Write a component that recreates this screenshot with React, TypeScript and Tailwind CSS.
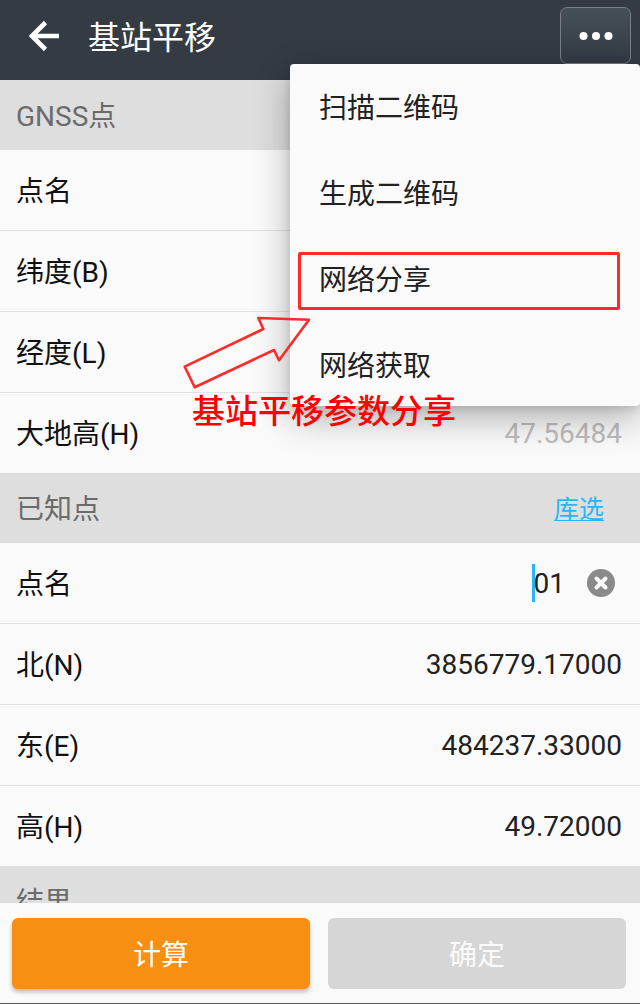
import React, { useState } from 'react';

interface Field {
  id: string;
  label: string;
  value: string;
  disabled?: boolean;
}

const gnssFields: Field[] = [
  { id: 'gnss-name', label: '点名', value: '', disabled: true },
  { id: 'gnss-lat', label: '纬度(B)', value: '', disabled: true },
  { id: 'gnss-lon', label: '经度(L)', value: '', disabled: true },
  { id: 'gnss-height', label: '大地高(H)', value: '47.56484', disabled: true },
];

const knownFields: Field[] = [
  { id: 'known-north', label: '北(N)', value: '3856779.17000' },
  { id: 'known-east', label: '东(E)', value: '484237.33000' },
  { id: 'known-height', label: '高(H)', value: '49.72000' },
];

const menuItems = ['扫描二维码', '生成二维码', '网络分享', '网络获取'];

const SectionHeader: React.FC<{ title: string; children?: React.ReactNode }> = ({ title, children }) => (
  <div className="flex h-[70px] items-center justify-between bg-[#dedede] pl-4 pr-9 pt-1">
    <h2 className="text-[28px] leading-10 text-[#6b6b6b]">{title}</h2>
    {children}
  </div>
);

const FieldRow: React.FC<{ field: Field }> = ({ field }) => (
  <div className="flex h-[81px] items-center border-b border-[#e2e2e2] pl-4 pr-[18px] last:h-20 last:border-b-0">
    <label htmlFor={field.id} className="shrink-0 pt-1 text-[28px] leading-10 text-[#111111]">
      {field.label}
    </label>
    <input
      id={field.id}
      type="text"
      defaultValue={field.value}
      disabled={field.disabled}
      className="h-10 min-w-0 flex-1 bg-transparent pt-0.5 text-right text-[28px] text-[#212121] outline-none disabled:text-[#bdbdbd]"
    />
  </div>
);

const ActionMenu: React.FC = () => (
  <div
    role="menu"
    className="absolute right-0 top-16 flex w-[350px] flex-col gap-4 rounded-[4px] bg-[#fafafa] pb-1.5 pt-2 shadow-[0_12px_36px_rgba(0,0,0,0.3),0_2px_10px_rgba(0,0,0,0.12)]"
  >
    {menuItems.map((item) => (
      <button
        key={item}
        type="button"
        role="menuitem"
        className="relative h-[70px] pl-[29px] pt-1 text-left text-[28px] text-[#212121]"
      >
        {item}
        {item === '网络分享' && (
          <span className="absolute bottom-1 left-2 right-5 top-2 rounded-[2px] border-[3px] border-[#ff2a2a]" />
        )}
      </button>
    ))}
    {/* callout pointing at the share entry */}
    <svg
      className="absolute right-[328px] top-[250px]"
      width="130"
      height="76"
      viewBox="0 0 130 76"
      fill="none"
      stroke="#ff2a2a"
      strokeWidth="2.6"
      strokeLinejoin="round"
      aria-hidden="true"
    >
      <path d="M2.7 52.7 81.3 15 76.3 4 127 5.7 97 46.3 92 36 12.7 73.3Z" />
    </svg>
    <p className="absolute right-[184px] top-[328px] whitespace-nowrap text-[33px] font-medium leading-10 text-[#ff0000]">
      基站平移参数分享
    </p>
  </div>
);

const App: React.FC = () => {
  const [pointName, setPointName] = useState('01');

  return (
    <div className="relative flex h-screen flex-col overflow-hidden border-b border-[#555555] bg-[#fafafa] font-['Roboto','Noto_Sans_CJK_SC',sans-serif]">
      <header className="flex h-20 shrink-0 items-center bg-[#343b43] pb-[9px] pl-7 pr-[9px]">
        <button type="button" aria-label="返回">
          <svg width="32" height="32" viewBox="0 0 32 32" fill="none" stroke="#ffffff" strokeWidth="4.6" aria-hidden="true">
            <path d="M17.5 2.5 4 16 17.5 29.5M4 16H31" />
          </svg>
        </button>
        <h1 className="ml-7 flex-1 pt-1 text-[32px] leading-10 text-white">基站平移</h1>
        <button
          type="button"
          aria-label="更多"
          className="flex h-[57px] w-[71px] items-center justify-center rounded-[7px] border border-[#7b7f84] bg-linear-to-b from-[#465058] to-[#333a43]"
        >
          <svg width="34" height="8" viewBox="0 0 34 8" fill="#ffffff" aria-hidden="true">
            <circle cx="4.5" cy="4" r="4" />
            <circle cx="17" cy="4" r="4" />
            <circle cx="29.5" cy="4" r="4" />
          </svg>
        </button>
      </header>

      <main className="min-h-0 flex-1 overflow-hidden">
        <SectionHeader title="GNSS点" />
        <div>
          {gnssFields.map((field) => (
            <FieldRow key={field.id} field={field} />
          ))}
        </div>

        <SectionHeader title="已知点">
          <a href="#library" className="text-[25px] leading-10 text-[#29b6f6] underline decoration-1 underline-offset-2">
            库选
          </a>
        </SectionHeader>
        <div>
          <div className="flex h-[81px] items-center border-b border-[#e2e2e2] pl-4 pr-[25px]">
            <label htmlFor="known-name" className="flex-1 pt-1 text-[28px] leading-10 text-[#111111]">
              点名
            </label>
            <span className="h-[38px] w-[3px] bg-[#29b6f6]" />
            <input
              id="known-name"
              type="text"
              value={pointName}
              onChange={(e) => setPointName(e.target.value)}
              className="-ml-0.5 h-10 w-8 bg-transparent pt-0.5 text-right text-[28px] text-[#212121] outline-none"
            />
            <button type="button" aria-label="清除" className="ml-[22px]" onClick={() => setPointName('')}>
              <svg width="28" height="28" viewBox="0 0 28 28" aria-hidden="true">
                <circle cx="14" cy="14" r="14" fill="#8a8a8a" />
                <path d="M9.5 9.5 18.5 18.5M18.5 9.5 9.5 18.5" stroke="#fafafa" strokeWidth="4" strokeLinecap="round" />
              </svg>
            </button>
          </div>
          {knownFields.map((field) => (
            <FieldRow key={field.id} field={field} />
          ))}
        </div>

        <SectionHeader title="结果" />
      </main>

      <footer className="flex shrink-0 gap-[18px] bg-[#fafafa] pb-3.5 pl-3 pr-3.5 pt-[15px]">
        <button
          type="button"
          className="h-[71px] flex-1 rounded-[6px] bg-[#f78f12] pt-1 text-[28px] text-white shadow-[0_3px_4px_rgba(0,0,0,0.25)]"
        >
          计算
        </button>
        <button type="button" disabled className="h-[71px] flex-1 rounded-[6px] bg-[#d6d6d6] pt-1 text-[28px] text-[#fafafa]">
          确定
        </button>
      </footer>

      <ActionMenu />
    </div>
  );
};

export default App;
